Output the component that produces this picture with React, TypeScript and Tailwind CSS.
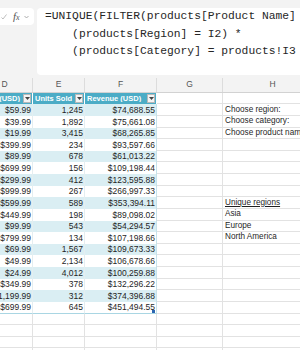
const prices = ['$59.99', '$39.99', '$19.99', '$399.99', '$89.99', '$699.99', '$299.99', '$999.99', '$599.99', '$449.99', '$99.99', '$799.99', '$69.99', '$49.99', '$24.99', '$349.99', '$1,199.99', '$699.99'];
const units = ['1,245', '1,892', '3,415', '234', '678', '156', '412', '267', '589', '198', '543', '134', '1,567', '2,134', '4,012', '378', '312', '645'];
const revenue = ['$74,688.55', '$75,661.08', '$68,265.85', '$93,597.66', '$61,013.22', '$109,198.44', '$123,595.88', '$266,997.33', '$353,394.11', '$89,098.02', '$54,294.57', '$107,198.66', '$109,673.33', '$106,678.66', '$100,259.88', '$132,296.22', '$374,396.88', '$451,494.55'];

// column H labels, keyed by data row index
const labels: Record<number, { text: string; underline?: boolean }> = {
    0: { text: 'Choose region:' },
    1: { text: 'Choose category:' },
    2: { text: 'Choose product name:' },
    8: { text: 'Unique regions', underline: true },
    9: { text: 'Asia' },
    10: { text: 'Europe' },
    11: { text: 'North America' },
};

const formula = [
    '=UNIQUE(FILTER(products[Product Name]',
    '    (products[Region] = I2) *',
    '    (products[Category] = products!I3',
];

function FilterButton() {
    return (
        <div className="w-[8px] h-[9px] shrink-0 bg-[#f4f4f4] border border-[#b8b8b8] flex items-center justify-center">
            <svg width="5" height="3" viewBox="0 0 5 3">
                <path d="M0 0h5L2.5 3z" fill="#444" />
            </svg>
        </div>
    );
}

function HeadCell({ width, label, right }: { width: string; label: string; right?: boolean }) {
    return (
        <div className={`${width} shrink-0 h-full bg-[#4bacc6] border-r border-white flex items-center pr-[1px]`}>
            <div
                className={`flex-1 min-w-0 overflow-hidden flex ${right ? 'justify-end' : 'justify-start'} pl-[2px] pr-[3px] text-white font-bold text-[7.5px] leading-none whitespace-nowrap`}
            >
                {label}
            </div>
            <FilterButton />
        </div>
    );
}

function FormulaBar() {
    return (
        <div className="h-[78px] bg-[#f3f3f3] flex items-start pt-[8px] gap-[3px] overflow-hidden">
            <div className="-ml-[8px] w-[42px] h-[17px] shrink-0 bg-white rounded-[4px] flex items-center pl-[9px]">
                <svg width="6" height="6" viewBox="0 0 6 6" className="shrink-0">
                    <path d="M0.5 3.5 2 5 5.5 0.5" stroke="#b5b5b5" strokeWidth="0.9" fill="none" />
                </svg>
                <span className="ml-[6px] font-['Liberation_Serif',serif] italic text-[11px] leading-none text-[#555]">
                    f<span className="text-[8px]">x</span>
                </span>
                <svg width="5" height="4" viewBox="0 0 5 4" className="ml-[4px] shrink-0">
                    <path d="M0.5 1 2.5 3 4.5 1" stroke="#9a9a9a" strokeWidth="0.8" fill="none" />
                </svg>
            </div>
            <div className="w-[280px] h-[67px] shrink-0 bg-white rounded-[4px] pl-[8px] font-['Liberation_Mono',monospace] text-[11.3px] leading-[17.5px] text-[#262626] whitespace-pre">
                {formula.map((line) => (
                    <div key={line}>{line}</div>
                ))}
            </div>
        </div>
    );
}

function ColumnLetters() {
    const cols = [
        ['D', 'w-[56px]'],
        ['E', 'w-[52px]'],
        ['F', 'w-[72px]'],
        ['G', 'w-[66px]'],
        ['H', 'w-[100px]'],
    ];
    return (
        <div className="h-[14.7px] bg-[#f3f3f3] border-b border-[#d2d2d2] flex -ml-[23px]">
            {cols.map(([letter, w]) => (
                <div key={letter} className={`${w} shrink-0 border-r border-[#dcdcdc] flex items-center justify-center text-[8.5px] text-[#555]`}>
                    {letter}
                </div>
            ))}
        </div>
    );
}

function DataRow({ index }: { index: number }) {
    const band = index % 2 === 0 ? 'bg-[#daeef3]' : 'bg-white';
    const last = index === prices.length - 1;
    const edge = last ? 'border-b border-b-[#a9d6e3]' : '';
    const label = labels[index];
    return (
        <div className="h-[11.63px] flex -ml-[23px] text-[8.5px] leading-none">
            <div className={`w-[56px] shrink-0 ${band} ${edge} border-r border-[#e4eef1] flex items-center justify-end pr-[1px]`}>{prices[index]}</div>
            <div className={`w-[52px] shrink-0 ${band} ${edge} border-r border-[#e4eef1] flex items-center justify-end pr-[1px]`}>{units[index]}</div>
            <div className={`relative w-[72px] shrink-0 ${band} ${edge} border-r border-[#c6e2ea] flex items-center justify-end pr-[1px]`}>
                {revenue[index]}
                {last && <div className="absolute right-[1px] bottom-0 w-[3px] h-[3px] bg-[#2b66b1]" />}
            </div>
            <div className="w-[66px] shrink-0 border-r border-b border-[#e2e2e2]" />
            <div className="w-[100px] shrink-0 border-r border-b border-[#e2e2e2] flex items-center pl-[2px] whitespace-nowrap text-[8.2px]">
                {label && <span className={label.underline ? 'underline' : ''}>{label.text}</span>}
            </div>
        </div>
    );
}

function EmptyRow() {
    return (
        <div className="h-[11.63px] flex -ml-[23px]">
            <div className="w-[56px] shrink-0 border-r border-b border-[#e2e2e2]" />
            <div className="w-[52px] shrink-0 border-r border-b border-[#e2e2e2]" />
            <div className="w-[72px] shrink-0 border-r border-b border-[#e2e2e2]" />
            <div className="w-[66px] shrink-0 border-r border-b border-[#e2e2e2]" />
            <div className="w-[100px] shrink-0 border-r border-b border-[#e2e2e2]" />
        </div>
    );
}

export default function App() {
    return (
        <div className="w-[300px] h-[350px] overflow-hidden bg-white font-['Liberation_Sans',Arial,sans-serif] text-[#1f1f1f]">
            <FormulaBar />
            <ColumnLetters />
            <div className="h-[11.63px] flex -ml-[23px]">
                <HeadCell width="w-[56px]" label="Unit Price (USD)" right />
                <HeadCell width="w-[52px]" label="Units Sold" />
                <HeadCell width="w-[72px]" label="Revenue (USD)" />
                <div className="w-[66px] shrink-0 border-r border-b border-[#e2e2e2]" />
                <div className="w-[100px] shrink-0 border-r border-b border-[#e2e2e2]" />
            </div>
            {prices.map((_, i) => (
                <DataRow key={i} index={i} />
            ))}
            {[0, 1, 2, 3, 4].map((i) => (
                <EmptyRow key={i} />
            ))}
        </div>
    );
}
